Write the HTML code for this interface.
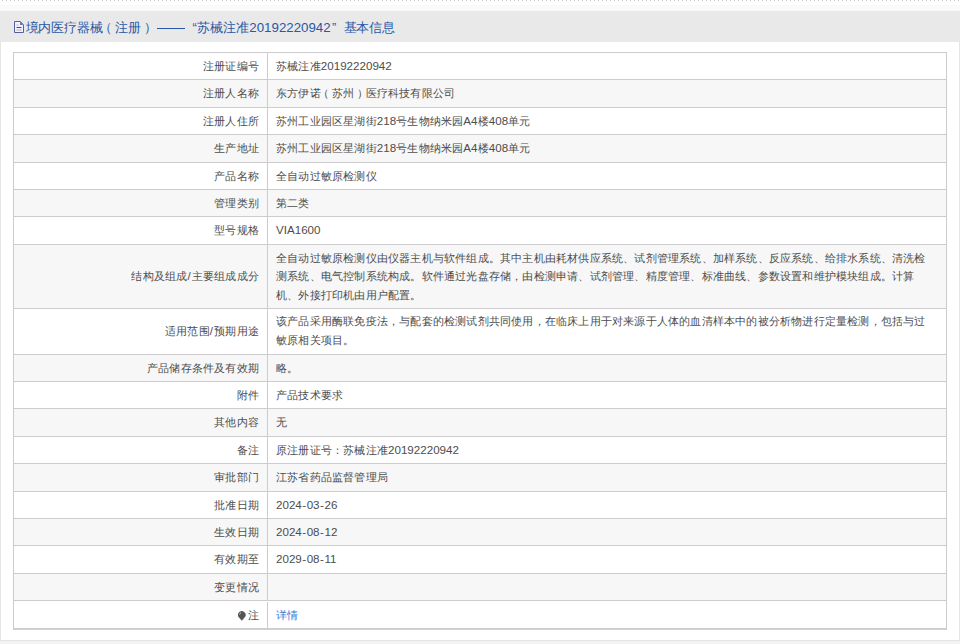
<!DOCTYPE html>
<html><head><meta charset="utf-8"><style>
html,body{margin:0;padding:0;}
body{width:960px;height:644px;position:relative;overflow:hidden;background:#f3f3f3;font-family:"Liberation Sans",sans-serif;}
.dots{position:absolute;left:0;top:0;width:960px;height:1px;background:linear-gradient(90deg,transparent 2px,#c4c4c4 2px,#c4c4c4 3px,transparent 3px) 0 0/4px 1px repeat-x #fff;}
.top{position:absolute;left:0;top:1px;width:960px;height:10px;background:linear-gradient(#fff 0 4px,#fafafa 4px);}
.box{position:absolute;left:0;top:11px;width:958px;height:629px;background:#fff;border:1px solid #e6e6e6;border-top:0;}
.hd{position:absolute;left:0;top:11px;width:960px;height:31px;background:#e9e9e9;}
.t{position:absolute;top:18px;font-size:12.8px;line-height:20px;color:#2858a6;white-space:nowrap;letter-spacing:-0.2px;}
.t .d{font-size:13.3px;letter-spacing:0;}
.dash{position:absolute;left:157px;top:28px;width:28px;height:1px;background:#2858a6;}
.ico{position:absolute;left:14px;top:21px;width:10px;height:12px;}
.tb{position:absolute;left:13px;top:0;width:934px;height:644px;}
.r{position:absolute;left:0;width:934px;border:1px solid #cdcbcd;box-sizing:border-box;background:#fff;}
.g{background:#f7f7f7;}
.l{position:absolute;left:0;top:0;bottom:0;width:254px;border-right:1px solid #cdcbcd;font-size:11.2px;color:#4d4d4d;line-height:18.2px;display:flex;align-items:center;justify-content:flex-end;padding-right:8px;box-sizing:border-box;white-space:nowrap;letter-spacing:0.2px;}
.v{position:absolute;left:262px;right:0;top:0;bottom:0;font-size:11.2px;color:#4d4d4d;line-height:18.2px;display:flex;align-items:center;white-space:nowrap;letter-spacing:0.2px;}
.n{letter-spacing:0;font-size:11.6px;}
.h{margin:0 .5px;}
b{font-weight:normal;position:relative;}
.po{left:-3px;}
.pc{left:3px;}
.sl{letter-spacing:1.2px;}
a{color:#3a7bd5;}
.pin{position:absolute;left:223.8px;top:8.8px;width:8px;height:10px;}
</style></head><body>
<div class=dots></div>
<div class=top></div>
<div class=box></div>
<div class=hd></div>
<svg class=ico viewBox="0 0 10 12"><path d="M0.5 0.5H6.3L9.5 3.7V11.5H0.5Z" fill="#f2f2ff" stroke="#55609a" stroke-width="1"/><path d="M6 0.5L9.5 4H6Z" fill="#6378c0"/><rect x="2.5" y="3.5" width="2" height="1" fill="#b8b0b0"/><rect x="2.5" y="6" width="5" height="1" fill="#3f4a80"/><rect x="2.5" y="8.4" width="5" height="1.3" fill="#bdbdbd"/></svg>
<div class=t style="left:25.5px">境内医疗器械<b class=po>（</b>注册<b class=pc>）</b></div>
<div class=dash></div>
<div class=t style="left:192.5px">“</div>
<div class=t style="left:197.3px">苏械注准</div>
<div class=t style="left:249.3px"><span class=d>20192220942</span></div>
<div class=t style="left:332px">”</div>
<div class=t style="left:343.7px">基本信息</div>
<div style="position:absolute;left:13px;top:629px;width:934px;height:1px;background:#d2d0d2"></div>
<div class=tb>
<div class="r" style="top:52px;height:28px"><div class=l style=""><span>注册证编号</span></div><div class=v style=""><span>苏械注准<span class=n>20192220942</span></span></div></div>
<div class="r g" style="top:79px;height:29px"><div class=l style=""><span>注册人名称</span></div><div class=v style=""><span>东方伊诺<b class=po>（</b>苏州<b class=pc>）</b>医疗科技有限公司</span></div></div>
<div class="r" style="top:107px;height:28px"><div class=l style=""><span>注册人住所</span></div><div class=v style=""><span>苏州工业园区星湖街<span class=n>218</span>号生物纳米园<span class=n>A4</span>楼<span class=n>408</span>单元</span></div></div>
<div class="r g" style="top:134px;height:29px"><div class=l style=""><span>生产地址</span></div><div class=v style=""><span>苏州工业园区星湖街<span class=n>218</span>号生物纳米园<span class=n>A4</span>楼<span class=n>408</span>单元</span></div></div>
<div class="r" style="top:162px;height:28px"><div class=l style=""><span>产品名称</span></div><div class=v style=""><span>全自动过敏原检测仪</span></div></div>
<div class="r g" style="top:189px;height:28px"><div class=l style=""><span>管理类别</span></div><div class=v style=""><span>第二类</span></div></div>
<div class="r" style="top:216px;height:29px"><div class=l style=""><span>型号规格</span></div><div class=v style=""><span><span class=n>VIA1600</span></span></div></div>
<div class="r g" style="top:244px;height:65px"><div class=l style=""><span>结构及组成<span class='n sl'>/</span>主要组成成分</span></div><div class=v style=""><span>全自动过敏原检测仪由仪器主机与软件组成。其中主机由耗材供应系统、试剂管理系统、加样系统、反应系统、给排水系统、清洗检<br>测系统、电气控制系统构成。软件通过光盘存储，由检测申请、试剂管理、精度管理、标准曲线、参数设置和维护模块组成。计算<br>机、外接打印机由用户配置。</span></div></div>
<div class="r" style="top:308px;height:47px"><div class=l style=""><span>适用范围<span class='n sl'>/</span>预期用途</span></div><div class=v style="top:-1px;bottom:1px;"><span>该产品采用酶联免疫法，与配套的检测试剂共同使用，在临床上用于对来源于人体的血清样本中的被分析物进行定量检测，包括与过<br>敏原相关项目。</span></div></div>
<div class="r g" style="top:354px;height:28px"><div class=l style=""><span>产品储存条件及有效期</span></div><div class=v style=""><span>略。</span></div></div>
<div class="r" style="top:381px;height:28px"><div class=l style=""><span>附件</span></div><div class=v style=""><span>产品技术要求</span></div></div>
<div class="r g" style="top:408px;height:29px"><div class=l style=""><span>其他内容</span></div><div class=v style=""><span>无</span></div></div>
<div class="r" style="top:436px;height:28px"><div class=l style=""><span>备注</span></div><div class=v style=""><span>原注册证号：苏械注准<span class=n>20192220942</span></span></div></div>
<div class="r g" style="top:463px;height:29px"><div class=l style=""><span>审批部门</span></div><div class=v style=""><span>江苏省药品监督管理局</span></div></div>
<div class="r" style="top:491px;height:28px"><div class=l style=""><span>批准日期</span></div><div class=v style=""><span><span class=n>2024<span class=h>-</span>03<span class=h>-</span>26</span></span></div></div>
<div class="r g" style="top:518px;height:28px"><div class=l style=""><span>生效日期</span></div><div class=v style=""><span><span class=n>2024<span class=h>-</span>08<span class=h>-</span>12</span></span></div></div>
<div class="r" style="top:545px;height:29px"><div class=l style=""><span>有效期至</span></div><div class=v style=""><span><span class=n>2029<span class=h>-</span>08<span class=h>-</span>11</span></span></div></div>
<div class="r g" style="top:573px;height:28px"><div class=l style=""><span>变更情况</span></div><div class=v style=""><span></span></div></div>
<div class="r" style="top:600px;height:29px"><div class=l style="top:1px;bottom:-1px;"><span><svg class=pin viewBox="0 0 8 10"><path d="M3.8 9.8L1 6.6A3.8 3.8 0 1 1 6.6 6.6Z" fill="#555"/><path d="M1.6 3.6A2.4 2.4 0 0 1 3 1.6" stroke="#ddd" stroke-width=".8" fill="none"/></svg>注</span></div><div class=v style="top:1px;bottom:-1px;"><span><a>详情</a></span></div></div>
</div>
</body></html>
